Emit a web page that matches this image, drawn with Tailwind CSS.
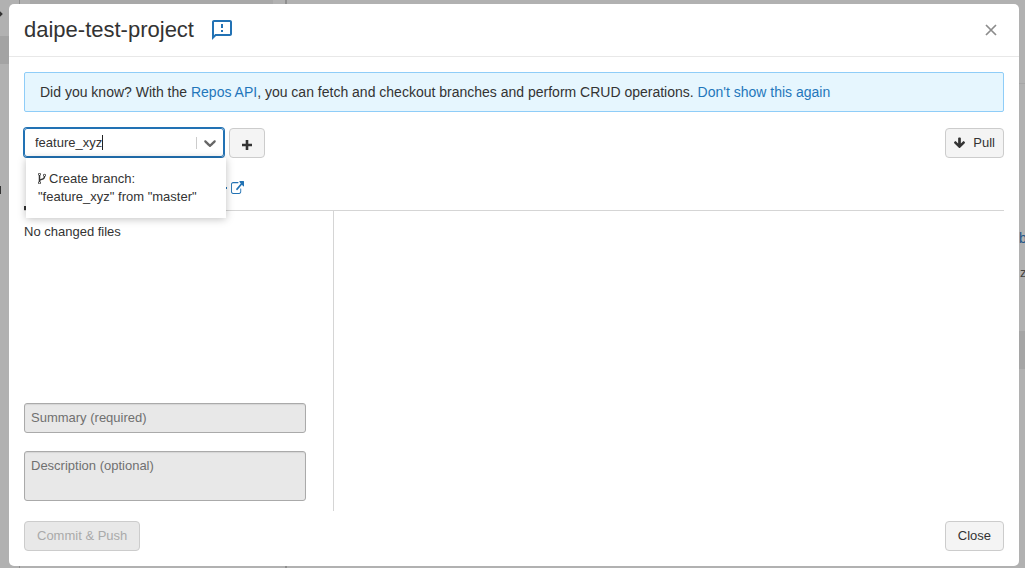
<!DOCTYPE html>
<html lang="en">
<head>
<meta charset="utf-8">
<meta name="viewport" content="width=device-width, initial-scale=1">
<title>daipe-test-project</title>
<script src="https://cdn.jsdelivr.net/npm/@tailwindcss/browser@4"></script>
</head>
<body class="relative h-screen overflow-hidden bg-[#b1b1b1] font-['Liberation_Sans',Arial,sans-serif] text-[13px] leading-[18px] text-[#333]">

<!-- Workspace dimmed behind the dialog -->
<div class="flex h-full" aria-hidden="true">
  <div class="flex w-5 shrink-0 flex-col border-r border-[#8f8f8f]">
    <div class="flex h-9 items-start pt-3"><span class="h-1 w-1 -translate-x-0.5 rotate-45 bg-[#333]"></span></div>
    <div class="h-7 bg-[#a3a3a3]"></div>
    <div class="mt-[122px] h-2 w-px bg-[#333]"></div>
  </div>
  <div class="w-[267px] shrink-0 border-r-2 border-[#8f8f8f] pl-2.5 pr-3"><div class="h-3 bg-[#a8a8a8]"></div></div>
  <div class="flex grow flex-col items-end">
    <div class="h-[84px] w-full border-b border-[#a6a6a6]"></div>
    <div class="mt-[145px] w-1.5 whitespace-nowrap text-[14px] text-[#1f5587]">b</div>
    <div class="mt-[17px] w-[5px] whitespace-nowrap text-[#444]">z</div>
    <div class="mt-[49px] h-[38px] w-full bg-[#a5a5a5]"></div>
  </div>
</div>

<div role="dialog" aria-modal="true" aria-labelledby="title" class="absolute top-1 right-1.5 bottom-0.5 left-[9px] flex flex-col rounded-[5px] bg-white">
  <header class="flex h-[53px] shrink-0 items-center border-b border-[#e8e8e8] px-[15px]">
    <h1 id="title" class="text-[22px] leading-7">daipe-test-project</h1>
    <button type="button" aria-label="Send feedback" class="ml-4 text-[#2272b4]">
      <svg class="size-6" viewBox="0 0 24 24" fill="currentColor"><path d="M20 2H4c-1.100 0-1.990.9-1.990 2L2 22l4-4h14c1.100 0 2-.9 2-2V4c0-1.100-.9-2-2-2zm0 14H5.170L4 17.170V4h16v12zm-9-4h2v2h-2zm0-6h2v4h-2z"/></svg>
    </button>
    <button type="button" aria-label="Close dialog" class="mr-[7px] ml-auto text-[#8c8c8c]">
      <svg class="size-3" viewBox="0 0 12 12" fill="none" stroke="currentColor" stroke-width="1.700"><path d="M1 1L11 11M11 1L1 11"/></svg>
    </button>
  </header>

  <main class="flex min-h-0 grow flex-col px-[15px] pt-[15px]">
    <p class="rounded-xs border border-[#8fcdf8] bg-[#e6f6fe] px-[15px] py-[9px] text-[14px] leading-5">Did you know? With the <a href="#" class="text-[#1f76bb]">Repos API</a>, you can fetch and checkout branches and perform CRUD operations. <a href="#" class="text-[#1f76bb]">Don't show this again</a></p>

    <div class="mt-4 flex items-start gap-[5px]">
      <div class="relative w-[200px]">
        <div class="flex h-[29px] items-center rounded-[3px] border border-[#2272b4] ring-1 ring-[#2272b4]">
          <input id="branch" type="text" role="combobox" aria-label="Branch" aria-expanded="true" aria-controls="branches" value="feature_xyz" class="field-sizing-content max-w-[150px] bg-transparent pl-2.5 caret-transparent outline-none">
          <span class="mr-auto h-[15px] w-px shrink-0 bg-[#222]"></span>
          <span class="h-3 w-px bg-[#ccc]"></span>
          <button type="button" aria-label="Show branches" class="px-[3px] text-[#666]">
            <svg class="size-5" viewBox="0 0 20 20" fill="currentColor"><path d="M4.516 7.548c.436-.446 1.043-.481 1.576 0L10 11.295l3.908-3.747c.533-.481 1.141-.446 1.574 0 .436.445.408 1.197 0 1.615-.406.418-4.695 4.502-4.695 4.502-.217.223-.502.335-.787.335s-.57-.112-.789-.335c0 0-4.287-4.084-4.695-4.502s-.436-1.170 0-1.615z"/></svg>
          </button>
        </div>
        <div id="branches" role="listbox" class="absolute top-[30px] left-0.5 z-10 w-[200px] bg-white px-3 py-3 shadow-[0_1px_8px_rgba(0,0,0,0.25)]">
          <div role="option" aria-selected="true">
            <svg class="mr-[3px] inline h-[13px] w-2 align-[-2px]" viewBox="384 0 1024 1792" preserveAspectRatio="none" fill="currentColor"><path d="M672 1472q0-40-28-68t-68-28-68 28-28 68 28 68 68 28 68-28 28-68zm0-1152q0-40-28-68t-68-28-68 28-28 68 28 68 68 28 68-28 28-68zm640 128q0-40-28-68t-68-28-68 28-28 68 28 68 68 28 68-28 28-68zm96 0q0 52-26 96.500t-70 69.500q-2 287-226 414-67 38-203 81-128 40-169.500 71t-41.500 100v26q44 25 70 69.500t26 96.500q0 80-56 136t-136 56-136-56-56-136q0-52 26-96.500t70-69.500v-820q-44-25-70-69.500t-26-96.500q0-80 56-136t136-56 136 56 56 136q0 52-26 96.500t-70 69.500v497q54-26 154-57 55-17 87.500-29.500t70.500-31 59-39.500 40.500-51 28-69.500 8.500-91.500q-44-25-70-69.500t-26-96.500q0-80 56-136t136-56 136 56 56 136z"/></svg>Create branch:<br>"feature_xyz" from "master"
          </div>
        </div>
      </div>
      <button type="button" aria-label="Add branch" class="flex h-[30px] w-9 items-center justify-center rounded-[4px] border border-[#ccc] bg-[#f4f4f4] pt-1">
        <svg class="size-2.5" viewBox="0 0 10 10" fill="none" stroke="currentColor" stroke-width="2.600" stroke-linecap="butt"><path d="M5 0V10M0 5H10"/></svg>
      </button>
      <button type="button" class="ml-auto flex h-[30px] items-center gap-2 rounded-[4px] border border-[#ccc] bg-[#f4f4f4] px-2">
        <svg class="h-3 w-[11px]" viewBox="117 128 1558 1536" fill="currentColor"><path d="M1675 832q0 53-37 90l-651 652q-39 37-91 37-53 0-90-37l-651-652q-38-36-38-90 0-53 38-91l74-75q39-37 91-37 53 0 90 37l294 294v-704q0-52 38-90t90-38h128q52 0 90 38t38 90v704l294-294q37-37 90-37 52 0 91 37l75 75q37 39 37 91z"/></svg>Pull
      </button>
    </div>

    <div class="flex h-[53px] shrink-0 items-end border-b border-[#d5d5d5]">
      <span class="h-1 w-[60px] bg-[#333]"></span>
      <a href="#" aria-label="Open repository" class="mb-4 ml-[142px] flex items-center gap-1 text-[#2272b4]">
        <span class="h-0.5 w-px bg-[#2272b4]"></span>
        <svg class="size-[13px]" viewBox="0 0 1792 1536" preserveAspectRatio="none" fill="currentColor"><path d="M1408 928v320q0 119-84.500 203.500t-203.500 84.500h-832q-119 0-203.500-84.500t-84.500-203.500v-832q0-119 84.500-203.500t203.500-84.500h704q14 0 23 9t9 23v64q0 14-9 23t-23 9h-704q-66 0-113 47t-47 113v832q0 66 47 113t113 47h832q66 0 113-47t47-113v-320q0-14 9-23t23-9h64q14 0 23 9t9 23zm384-864v512q0 26-19 45t-45 19-45-19l-176-176-652 652q-10 10-23 10t-23-10l-114-114q-10-10-10-23t10-23l652-652-176-176q-19-19-19-45t19-45 45-19h512q26 0 45 19t19 45z"/></svg>
      </a>
    </div>

    <section class="flex min-h-0 w-[310px] grow flex-col border-r border-[#d5d5d5] pt-3 pr-[27px] pb-2.5">
      <p>No changed files</p>
      <input type="text" disabled aria-label="Summary" placeholder="Summary (required)" class="mt-auto h-[30px] w-full rounded-[3px] border border-[#aaa] bg-[#e8e8e8] px-1.5 pb-0.5 shadow-[inset_0_1px_1px_rgba(0,0,0,0.08)] placeholder:text-[#707070]">
      <textarea disabled aria-label="Description" placeholder="Description (optional)" class="mt-[18px] block h-[50px] w-full shrink-0 resize-none rounded-[3px] border border-[#aaa] bg-[#e8e8e8] px-1.5 py-[5px] shadow-[inset_0_1px_1px_rgba(0,0,0,0.08)] placeholder:text-[#707070]"></textarea>
    </section>
  </main>

  <footer class="flex shrink-0 justify-between px-[15px] pt-2.5 pb-[15px]">
    <button type="button" disabled class="h-[30px] rounded-[4px] border border-[#ccc] bg-[#e8e8e8] px-3 text-[#aaa]">Commit &amp; Push</button>
    <button type="button" class="h-[30px] rounded-[4px] border border-[#ccc] bg-[#f4f4f4] px-3">Close</button>
  </footer>
</div>
</body>
</html>
